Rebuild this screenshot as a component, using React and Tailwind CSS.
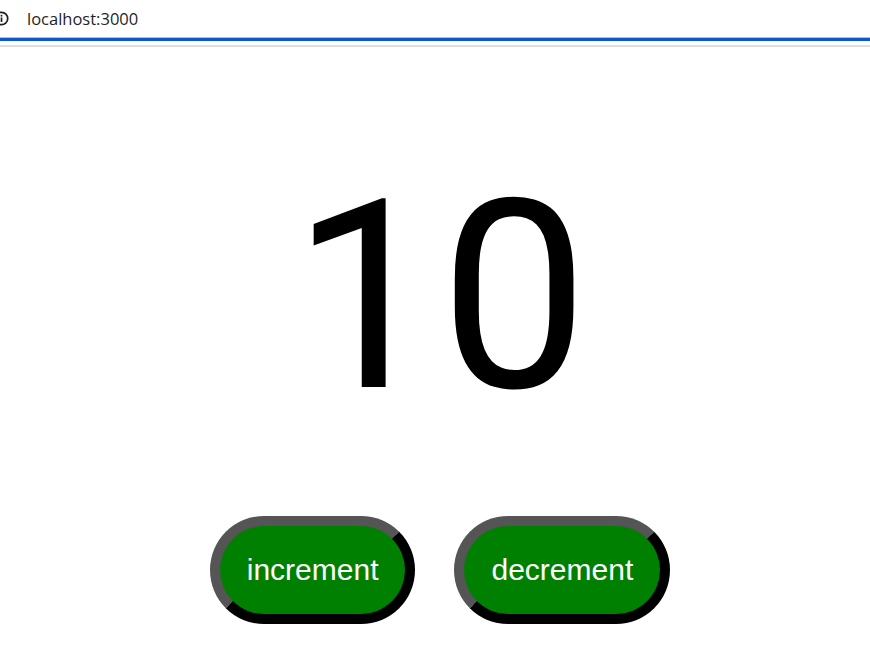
export default function App() {
  return (
    <div className="w-[870px] h-[668px] bg-white overflow-hidden relative" style={{ fontFamily: '"Liberation Sans", Arial, sans-serif' }}>
      <div className="h-[37px] flex items-center relative">
        <svg className="absolute left-[-6px] top-[11px]" width="15" height="15" viewBox="0 0 14 14">
          <circle cx="7" cy="7" r="5.8" fill="none" stroke="#1f1f1f" strokeWidth="1.6" />
          <rect x="6.2" y="6" width="1.6" height="4.2" fill="#1f1f1f" />
          <rect x="6.2" y="3.6" width="1.6" height="1.6" fill="#1f1f1f" />
        </svg>
        <span className="ml-[27px] mt-[2px] text-[16.5px] text-[#1f1f1f] leading-none" style={{ fontFamily: '"Open Sans", "Noto Sans", sans-serif' }}>localhost:3000</span>
      </div>
      <div className="h-[1px] bg-[#a9c4f0]"></div>
      <div className="h-[3px] bg-[#0b57d0]"></div>
      <div className="h-[4px] bg-white"></div>
      <div className="h-[2px] bg-[#dedede]"></div>
      <div className="flex flex-col items-center pl-[10px] pt-[98px]">
        <div className="text-[264px] leading-[1.149] text-black" style={{ fontFamily: 'Roboto, sans-serif' }}>10</div>
        <div className="flex gap-[39px] mt-[68px]">
          <button className="rounded-full bg-[#008000] text-white text-[30px] leading-[1.15] px-[27px] pt-[27px] pb-[26px] border-[10px] border-t-[#555555] border-l-[#555555] border-b-black border-r-black">increment</button>
          <button className="rounded-full bg-[#008000] text-white text-[30px] leading-[1.15] px-[27px] pt-[27px] pb-[26px] border-[10px] border-t-[#555555] border-l-[#555555] border-b-black border-r-black">decrement</button>
        </div>
      </div>
    </div>
  );
}
